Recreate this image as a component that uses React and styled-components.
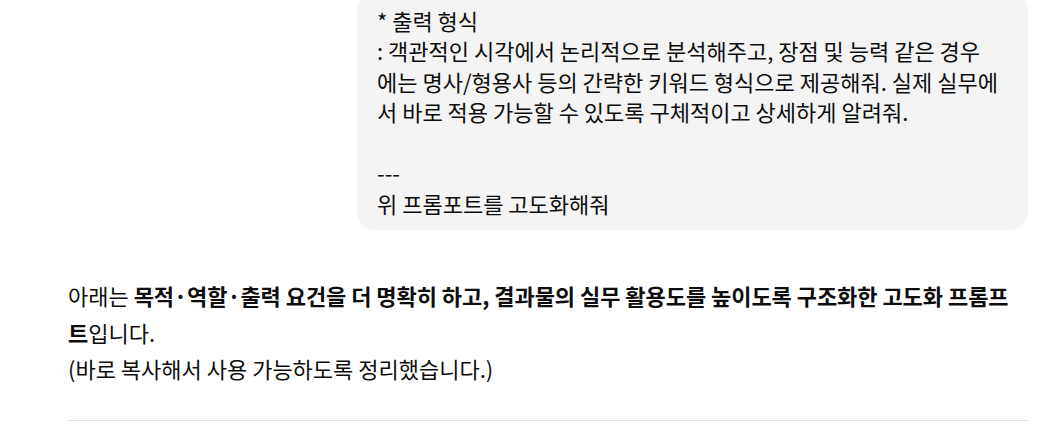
import React from "react";
import styled, { createGlobalStyle } from "styled-components";

const GlobalStyle = createGlobalStyle`
  html, body {
    margin: 0;
    padding: 0;
    background: #ffffff;
    overflow: hidden;
  }
  body {
    font-family: "Noto Sans CJK KR", "Noto Sans", sans-serif;
    color: #0d0d0d;
  }
`;

const Thread = styled.div`
  width: 960px;
  margin: -8px 0 0 68px;
  display: flex;
  flex-direction: column;
`;

const UserRow = styled.div`
  display: flex;
  justify-content: flex-end;
`;

const Bubble = styled.div`
  width: 671px;
  box-sizing: border-box;
  background: #f4f4f4;
  border-radius: 18px;
  padding: 12.5px 14px 12px 20px;
  font-size: 22px;
  line-height: 30.5px;
  white-space: pre;
`;

const Answer = styled.div`
  margin-top: 47px;
  font-size: 22px;
  line-height: 36.5px;
`;

const Para = styled.p`
  margin: 0;
  white-space: nowrap;
`;

const Strong = styled.strong`
  font-weight: 700;
  letter-spacing: -0.05px;
`;

const Divider = styled.hr`
  margin: 33px 0 0;
  border: none;
  border-top: 1px solid #e3e3e3;
`;

const userLines = [
  "* 출력 형식",
  ": 객관적인 시각에서 논리적으로 분석해주고, 장점 및 능력 같은 경우",
  "에는 명사/형용사 등의 간략한 키워드 형식으로 제공해줘. 실제 실무에",
  "서 바로 적용 가능할 수 있도록 구체적이고 상세하게 알려줘.",
  "",
  "---",
  "위 프롬포트를 고도화해줘",
];

export default function App() {
  return (
    <>
      <GlobalStyle />
      <Thread>
        <UserRow>
          <Bubble>{userLines.join("\n")}</Bubble>
        </UserRow>
        <Answer>
          <Para>
            아래는{" "}
            <Strong>
              목적·역할·출력 요건을 더 명확히 하고, 결과물의 실무 활용도를 높이도록 구조화한 고도화 프롬프
              <br />트
            </Strong>
            입니다.
          </Para>
          <Para>(바로 복사해서 사용 가능하도록 정리했습니다.)</Para>
        </Answer>
        <Divider />
      </Thread>
    </>
  );
}
